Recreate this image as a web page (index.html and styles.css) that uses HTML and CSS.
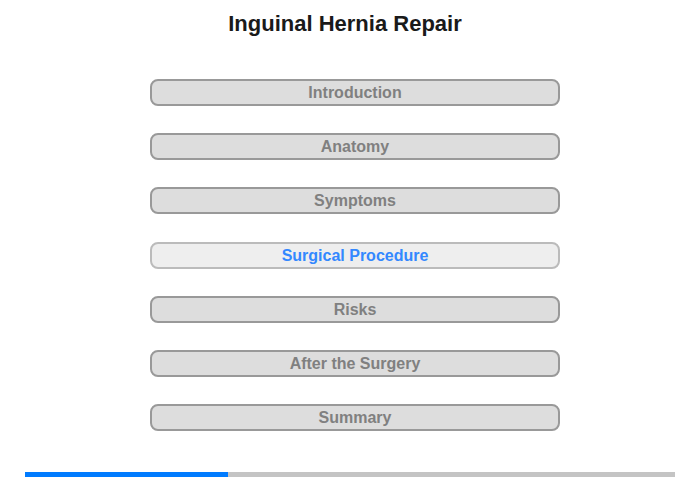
FILE: index.html
```html
<!DOCTYPE html>
<html>
<head>
<meta charset="utf-8">
<link rel="stylesheet" href="styles.css">
</head>
<body>
<div class="page">
  <h1 class="title">Inguinal Hernia Repair</h1>
  <nav class="menu">
    <div class="item">Introduction</div>
    <div class="item">Anatomy</div>
    <div class="item">Symptoms</div>
    <div class="item active">Surgical Procedure</div>
    <div class="item">Risks</div>
    <div class="item">After the Surgery</div>
    <div class="item">Summary</div>
  </nav>
  <div class="progress"><div class="fill" style="width:203px"></div></div>
</div>
</body>
</html>
```
FILE: styles.css
```css
html, body { margin: 0; padding: 0; background: #fff; }
.page {
  width: 700px;
  height: 480px;
  font-family: "Liberation Sans", Arial, sans-serif;
  display: flex;
  flex-direction: column;
}
.title {
  margin: 0;
  padding-top: 11px;
  width: 690px;
  text-align: center;
  font-size: 22px;
  line-height: 26px;
  font-weight: bold;
  color: #1a1a1a;
}
.menu {
  margin: 42px 0 0 150px;
  width: 410px;
  display: flex;
  flex-direction: column;
  gap: 27.2px;
}
.item {
  box-sizing: border-box;
  height: 27px;
  border: 2px solid #999;
  border-radius: 8px;
  background: #ddd;
  color: #808080;
  font-size: 16px;
  font-weight: bold;
  line-height: 23px;
  text-align: center;
}
.item.active {
  background: #eee;
  border-color: #bbb;
  color: #3388ff;
}
.progress {
  margin: 41px 25px 0 25px;
  height: 5px;
  background: #c4c4c4;
}
.fill {
  height: 100%;
  background: #007bff;
}
```
